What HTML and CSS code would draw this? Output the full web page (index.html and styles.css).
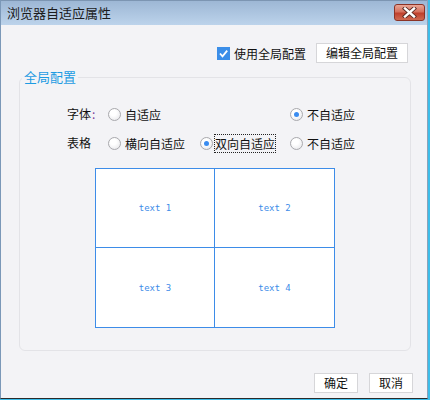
FILE: index.html
```html
<!DOCTYPE html>
<html lang="zh">
<head>
<meta charset="utf-8">
<link rel="stylesheet" href="styles.css">
</head>
<body>
<div class="frame">
  <div class="window">
    <div class="titlebar">
      <span class="title">浏览器自适应属性</span>
      <button class="close" aria-label="关闭">
        <svg width="17" height="11" viewBox="0 0 17 11">
          <path d="M4 1.5 L13 9.5 M13 1.5 L4 9.5" stroke="#5a2a22" stroke-width="4.2" stroke-linecap="square"/>
          <path d="M4 1.5 L13 9.5 M13 1.5 L4 9.5" stroke="#ffffff" stroke-width="2.4" stroke-linecap="square"/>
        </svg>
      </button>
    </div>
    <div class="client">
      <div class="toprow">
        <label class="check">
          <span class="box">
            <svg width="13" height="13" viewBox="0 0 13 13"><path d="M3 6.5 L5.5 9.3 L10.2 3.6" fill="none" stroke="#fff" stroke-width="1.8"/></svg>
          </span>
          <span>使用全局配置</span>
        </label>
        <button class="btn edit">编辑全局配置</button>
      </div>
      <fieldset class="group">
        <legend>全局配置</legend>
        <div class="options">
          <span class="lbl">字体<span class="colon">:</span></span>
          <span class="radio c1"><span class="dot"></span>自适应</span>
          <span class="radio c3 checked"><span class="dot"></span>不自适应</span>
          <span class="lbl">表格</span>
          <span class="radio c1"><span class="dot"></span>横向自适应</span>
          <span class="radio c2 checked tight"><span class="dot"></span><span class="focus">双向自适应</span></span>
          <span class="radio c3"><span class="dot"></span>不自适应</span>
        </div>
        <div class="preview">
          <div class="cell r">text 1</div>
          <div class="cell">text 2</div>
          <div class="cell r b">text 3</div>
          <div class="cell b">text 4</div>
        </div>
      </fieldset>
      <div class="actions">
        <button class="btn small">确定</button>
        <button class="btn small">取消</button>
      </div>
    </div>
  </div>
</div>
</body>
</html>
```
FILE: styles.css
```css
html, body {
  margin: 0;
  padding: 0;
  background: #f3f3f6;
}
body {
  font-family: "Noto Sans CJK SC", "Noto Sans", sans-serif;
  font-size: 12px;
  color: #111;
}
.frame {
  width: 430px;
  height: 400px;
  box-sizing: border-box;
  border-right: 2px solid #3dbde9;
  border-bottom: 1px solid #3dbde9;
}
.window {
  height: 100%;
  box-sizing: border-box;
  border-left: 1px solid #7b98b8;
  border-right: 1px solid #8da2b8;
  border-bottom: 1px solid #2a2a2a;
  display: flex;
  flex-direction: column;
  background: #f3f3f6;
}
.titlebar {
  height: 25px;
  flex: none;
  display: flex;
  align-items: center;
  justify-content: space-between;
  padding: 0 2px 0 6px;
  background: linear-gradient(#9db7d5, #bcd3eb);
  border-top: 1px solid #7c95b2;
  box-sizing: border-box;
}
.title {
  font-size: 13px;
  color: #1c1c1c;
  line-height: 18px;
}
.close {
  width: 31px;
  height: 17px;
  margin-top: -2px;
  padding: 0;
  border: 1px solid #8b3326;
  border-radius: 3px;
  background: linear-gradient(#e9a696 0%, #d5715e 45%, #c0402d 55%, #cf6a52 100%);
  display: flex;
  align-items: center;
  justify-content: center;
}
.client {
  flex: 1;
  display: flex;
  flex-direction: column;
}
.toprow {
  display: flex;
  justify-content: flex-end;
  align-items: center;
  gap: 10px;
  margin: 18px 19px 0 0;
  height: 20px;
}
.check {
  display: flex;
  align-items: center;
  gap: 4px;
  font-size: 12px;
}
.box {
  width: 13px;
  height: 13px;
  background: #3b8ee8;
  display: flex;
}
.btn {
  font-family: "Noto Sans CJK SC", "Noto Sans", sans-serif;
  font-size: 12px;
  color: #111;
  background: #fff;
  border: 1px solid #d6d6d9;
  height: 20px;
  padding: 0;
  line-height: 18px;
}
.edit {
  width: 92px;
}
.group {
  margin: 5px 16px 0 18px;
  padding: 0 0 22px 0;
  border: 1px solid #e3e3e7;
  border-radius: 6px;
  min-width: 0;
}
.group legend {
  margin-left: 2px;
  padding: 0 2px;
  font-size: 13px;
  line-height: 18px;
  color: #1d9be2;
}
.options {
  display: grid;
  grid-template-columns: 41px 92px 90px auto;
  row-gap: 9px;
  margin: 18px 0 0 47px;
}
.lbl {
  grid-column: 1;
  height: 20px;
  line-height: 20px;
}
.colon {
  color: #7a3d9a;
  margin-left: 1px;
}
.radio {
  display: flex;
  align-items: center;
  gap: 4px;
  height: 20px;
  white-space: nowrap;
}
.radio.tight {
  gap: 2px;
}
.c1 { grid-column: 2; }
.c2 { grid-column: 3; }
.c3 { grid-column: 4; }
.dot {
  width: 11px;
  height: 11px;
  border: 1px solid #a9a9ad;
  border-radius: 50%;
  background: radial-gradient(circle at 40% 35%, #ffffff 30%, #e2e2e6 100%);
  flex: none;
  position: relative;
}
.checked .dot::after {
  content: "";
  position: absolute;
  left: 3px;
  top: 3px;
  width: 5px;
  height: 5px;
  border-radius: 50%;
  background: #3a8cf0;
}
.focus {
  outline: 1px dotted #222;
  outline-offset: 0;
  padding: 0;
}
.preview {
  display: grid;
  grid-template-columns: 119px 119px;
  grid-template-rows: 79px 79px;
  border: 1px solid #3d8ce8;
  width: 238px;
  margin: 15px 0 0 75px;
}
.cell {
  background: #fff;
  display: flex;
  align-items: center;
  justify-content: center;
  font-family: "DejaVu Sans Mono", monospace;
  font-size: 9px;
  color: #3d8ce8;
}
.cell.r {
  border-right: 1px solid #3d8ce8;
}
.cell:nth-child(1), .cell:nth-child(2) {
  border-bottom: 1px solid #3d8ce8;
}
.actions {
  display: flex;
  justify-content: flex-end;
  gap: 11px;
  margin: 22px 14px 0 0;
}
.small {
  width: 44px;
}
```
